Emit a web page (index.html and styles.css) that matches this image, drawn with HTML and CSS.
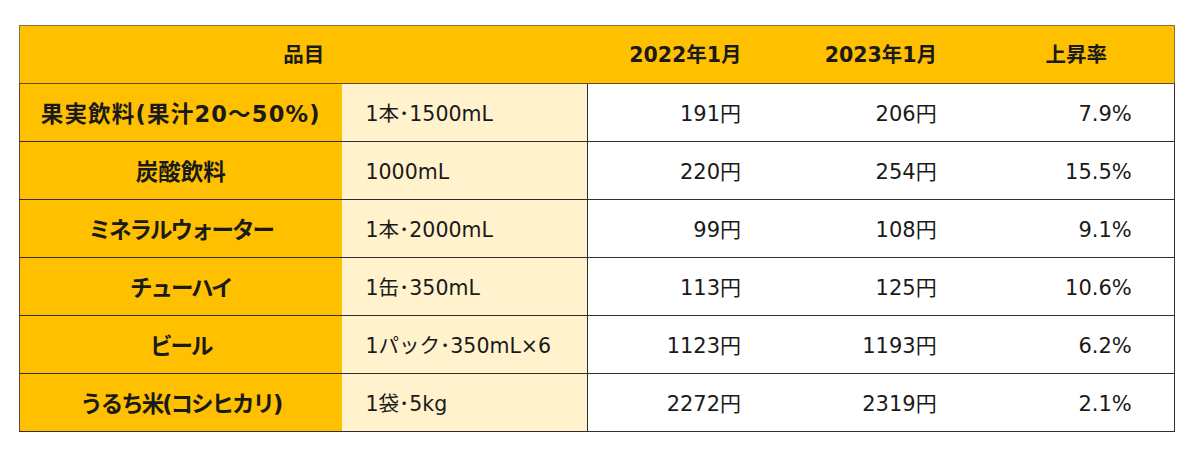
FILE: index.html
```html
<!DOCTYPE html>
<html lang="ja">
<head>
<meta charset="utf-8">
<link rel="stylesheet" href="styles.css">
</head>
<body>
<table class="price-table">
  <colgroup>
    <col class="c-name"><col class="c-spec"><col class="c-num"><col class="c-num"><col class="c-num">
  </colgroup>
  <thead>
    <tr>
      <th colspan="2">品目</th>
      <th>2022年1月</th>
      <th>2023年1月</th>
      <th>上昇率</th>
    </tr>
  </thead>
  <tbody>
    <tr><td class="name wide">果実飲料(果汁20～50%)</td><td class="spec">1本･1500mL</td><td class="num">191円</td><td class="num">206円</td><td class="num">7.9%</td></tr>
    <tr><td class="name">炭酸飲料</td><td class="spec">1000mL</td><td class="num">220円</td><td class="num">254円</td><td class="num">15.5%</td></tr>
    <tr><td class="name kana">ミネラルウォーター</td><td class="spec">1本･2000mL</td><td class="num">99円</td><td class="num">108円</td><td class="num">9.1%</td></tr>
    <tr><td class="name kana">チューハイ</td><td class="spec">1缶･350mL</td><td class="num">113円</td><td class="num">125円</td><td class="num">10.6%</td></tr>
    <tr><td class="name kana">ビール</td><td class="spec">1パック･350mL×6</td><td class="num">1123円</td><td class="num">1193円</td><td class="num">6.2%</td></tr>
    <tr><td class="name kana">うるち米(コシヒカリ)</td><td class="spec">1袋･5kg</td><td class="num">2272円</td><td class="num">2319円</td><td class="num">2.1%</td></tr>
  </tbody>
</table>
</body>
</html>
```
FILE: styles.css
```css
html, body {
  margin: 0;
  padding: 0;
  background: #ffffff;
}
body {
  padding: 25px 0 0 19px;
  font-family: "DejaVu Sans", "Noto Sans CJK JP", sans-serif;
  color: #1a1a1a;
}
.price-table {
  border-collapse: collapse;
  width: 1155px;
  table-layout: fixed;
}
.c-name { width: 322px; }
.c-spec { width: 246px; }
.c-num { width: 195.6px; }

.price-table th {
  background: #ffc000;
  height: 57px;
  padding: 0;
  font-size: 20.5px;
  line-height: 26px;
  font-weight: 700;
  text-align: center;
  border-top: 1px solid #86733a;
  border-bottom: 1px solid #5b4d20;
}
.price-table th:first-child { border-left: 1px solid #86733a; }
.price-table th:last-child { border-right: 1px solid #86733a; }

.price-table td {
  height: 55px;
  padding: 2px 0 0 0;
  font-size: 21px;
  line-height: 26px;
  border-bottom: 1px solid #2e2e2e;
  white-space: nowrap;
}
.price-table td.name {
  background: #ffc000;
  font-weight: 700;
  text-align: center;
  font-size: 22.5px;
  border-left: 1px solid #5a5030;
}
.price-table td.name.wide {
  letter-spacing: 1.2px;
}
.price-table td.name.kana {
  letter-spacing: -2px;
}
.price-table td.spec {
  background: #fff2cc;
  text-align: left;
  padding-left: 24px;
  font-size: 20.5px;
  border-right: 1px solid #2e2e2e;
}
.price-table td.num {
  background: #ffffff;
  text-align: right;
  padding-right: 42px;
}
.price-table td:last-child { border-right: 1px solid #2e2e2e; }
```
